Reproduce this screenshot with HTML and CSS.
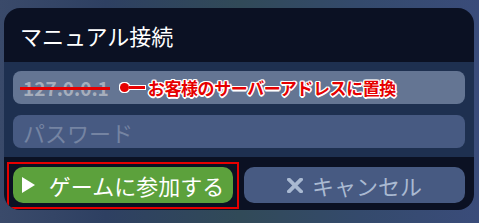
FILE: index.html
```html
<!DOCTYPE html>
<html lang="ja">
<head>
    <meta charset="UTF-8">
    <meta name="viewport" content="width=device-width, initial-scale=1.0">
    <title>マニュアル接続</title>
    <link rel="stylesheet" href="styles.css">
</head>
<body>
    <div class="dialog">
        <!-- ヘッダー -->
        <div class="dialog-header">マニュアル接続</div>

        <!-- 入力欄 -->
        <div class="dialog-body">
            <div class="field field-active">
                <span class="field-value">127.0.0.1</span>
                <span class="note-marker"><span class="note-dot"></span><span class="note-line"></span></span>
                <span class="note-text">お客様のサーバーアドレスに置換</span>
            </div>
            <div class="field">
                <span class="field-placeholder">パスワード</span>
            </div>
        </div>

        <!-- ボタン -->
        <div class="dialog-footer">
            <div class="highlight">
                <button class="btn btn-join">
                    <svg class="btn-icon" width="13" height="16" viewBox="0 0 13 16"><path d="M0 0 L13 8 L0 16 Z" fill="#ffffff"/></svg>
                    ゲームに参加する
                </button>
                <div class="highlight-frame"></div>
            </div>
            <button class="btn btn-cancel">
                <svg class="btn-icon" width="16" height="15" viewBox="0 0 16 15"><path d="M2 1.5 L14 13.5 M14 1.5 L2 13.5" stroke="#a9b9d1" stroke-width="3.8" stroke-linecap="square"/></svg>
                キャンセル
            </button>
        </div>
    </div>
</body>
</html>
```

FILE: styles.css
```css
:root {
    --dark-color: #0b1123;
    --body-color: #1e3050;
    --field-color: #475a82;
    --field-active-color: #647593;
    --green-color: #5ca13c;
    --cancel-text: #a9b9d1;
    --note-color: #e60000;
}

html, body {
    width: 479px;
    height: 223px;
}

body {
    margin: 0;
    padding: 8px 5px 13px 4px;
    box-sizing: border-box;
    font-family: "Noto Sans CJK JP", "Noto Sans", sans-serif;
    background: linear-gradient(90deg, #3a4a6a 0%, #2e4062 22%, #314a58 50%, #344a6c 75%, #3a4c7a 100%);
    overflow: hidden;
}

.dialog {
    width: 470px;
    height: 202px;
    border-radius: 16px;
    overflow: hidden;
    display: flex;
    flex-direction: column;
    background: var(--dark-color);
}

.dialog-header {
    height: 54px;
    display: flex;
    align-items: center;
    padding: 0 16px;
    color: #ffffff;
    font-size: 22px;
}

.dialog-body {
    background: var(--body-color);
    padding: 9px;
    display: flex;
    flex-direction: column;
    gap: 11px;
}

.field {
    height: 33px;
    border-radius: 8px;
    background: var(--field-color);
    display: flex;
    align-items: center;
    padding: 0 10px;
    font-size: 22px;
}

.field-active {
    background: var(--field-active-color);
}

.field-value {
    position: relative;
    color: #a6aebc;
    font-size: 19px;
    font-weight: bold;
}

.field-value::after {
    content: "";
    position: absolute;
    left: -3px;
    right: -1px;
    top: 50%;
    height: 3px;
    margin-top: -1px;
    background: var(--note-color);
}

.field-placeholder {
    color: #7584a2;
}

.note-marker {
    display: flex;
    align-items: center;
    margin-left: 11px;
    filter: drop-shadow(1px 0 0 #fff) drop-shadow(-1px 0 0 #fff) drop-shadow(0 1px 0 #fff) drop-shadow(0 -1px 0 #fff);
}

.note-dot {
    width: 9px;
    height: 9px;
    border-radius: 50%;
    background: var(--note-color);
}

.note-line {
    width: 16px;
    height: 3px;
    background: var(--note-color);
}

.note-text {
    margin-left: 3px;
    color: var(--note-color);
    font-size: 17px;
    font-weight: bold;
    letter-spacing: -0.4px;
    text-shadow: 1.5px 0 0 #fff, -1.5px 0 0 #fff, 0 1.5px 0 #fff, 0 -1.5px 0 #fff,
        1px 1px 0 #fff, -1px 1px 0 #fff, 1px -1px 0 #fff, -1px -1px 0 #fff;
}

.dialog-footer {
    flex: 1;
    display: flex;
    gap: 11px;
    padding: 10px 9px 7px;
}

.highlight {
    position: relative;
    width: 220px;
    display: flex;
}

.highlight-frame {
    position: absolute;
    top: -5px;
    left: -6px;
    right: -6px;
    bottom: -6px;
    border: 2px solid var(--note-color);
    pointer-events: none;
}

.btn {
    flex: 1;
    height: 36px;
    border: none;
    border-radius: 10px;
    display: flex;
    align-items: center;
    justify-content: center;
    font-family: inherit;
    font-size: 22px;
    padding: 0;
}

.btn-join {
    background: var(--green-color);
    color: #ffffff;
    gap: 14px;
}

.btn-cancel {
    background: var(--field-color);
    color: var(--cancel-text);
    gap: 9px;
}

.btn-icon {
    flex: none;
}
```
